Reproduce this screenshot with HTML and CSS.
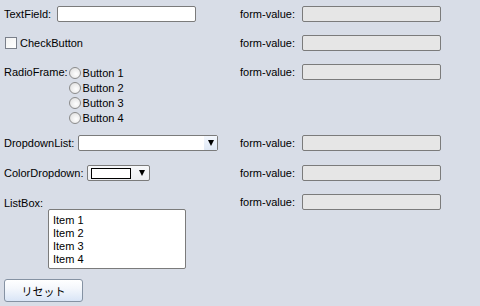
FILE: index.html
```html
<!DOCTYPE html>
<html lang="ja">
<head>
<meta charset="utf-8">
<title>Form</title>
<link rel="stylesheet" href="styles.css">
</head>
<body>
<form class="form">
  <div class="row">
    <div class="left"><span class="lbl">TextField:</span><span class="textfield"></span></div>
    <div class="right"><span class="vlbl">form-value:</span><span class="value"></span></div>
  </div>
  <div class="row gap13">
    <div class="left"><span class="check"></span><span class="lbl">CheckButton</span></div>
    <div class="right"><span class="vlbl">form-value:</span><span class="value"></span></div>
  </div>
  <div class="row gap13 top">
    <div class="left top">
      <span class="lbl radiolbl">RadioFrame:</span>
      <div class="radios">
        <div class="radio-row"><span class="radio"></span><span>Button 1</span></div>
        <div class="radio-row"><span class="radio"></span><span>Button 2</span></div>
        <div class="radio-row"><span class="radio"></span><span>Button 3</span></div>
        <div class="radio-row"><span class="radio"></span><span>Button 4</span></div>
      </div>
    </div>
    <div class="right"><span class="vlbl">form-value:</span><span class="value"></span></div>
  </div>
  <div class="row gap10">
    <div class="left"><span class="lbl">DropdownList:</span><span class="dropdown"><span class="dd-btn"><span class="tri"></span></span></span></div>
    <div class="right"><span class="vlbl">form-value:</span><span class="value"></span></div>
  </div>
  <div class="row gap14">
    <div class="left"><span class="lbl">ColorDropdown:</span><span class="colordd"><span class="swatch"></span><span class="tri"></span></span></div>
    <div class="right"><span class="vlbl">form-value:</span><span class="value"></span></div>
  </div>
  <div class="row gap13 top">
    <div class="left"><span class="lbl listlbl">ListBox:</span></div>
    <div class="right"><span class="vlbl">form-value:</span><span class="value"></span></div>
  </div>
  <div class="listbox">
    <div>Item 1</div>
    <div>Item 2</div>
    <div>Item 3</div>
    <div>Item 4</div>
  </div>
  <button type="button" class="reset">リセット</button>
</form>
</body>
</html>
```
FILE: styles.css
```css
html, body {
  margin: 0;
  padding: 0;
  background: #d8dde7;
}
body {
  font-family: "Liberation Sans", Arial, sans-serif;
  font-size: 11px;
  color: #000;
  width: 480px;
  height: 306px;
  overflow: hidden;
}
.form {
  padding: 6px 0 0 4px;
  margin: 0;
}
.row {
  display: flex;
  align-items: center;
  height: 16px;
}
.row.top { align-items: flex-start; height: auto; }
.gap13 { margin-top: 13px; }
.gap10 { margin-top: 10px; }
.gap14 { margin-top: 14px; }
.left {
  width: 236px;
  display: flex;
  align-items: center;
  height: 16px;
}
.left.top { align-items: flex-start; height: auto; }
.right {
  display: flex;
  align-items: center;
  height: 16px;
}
.lbl { white-space: nowrap; margin-right: 4px; line-height: 16px; }
.vlbl { width: 62px; white-space: nowrap; line-height: 16px; }
.textfield {
  box-sizing: border-box;
  width: 139px;
  height: 16px;
  margin-left: 2px;
  background: #fff;
  border: 1px solid #7b7b7b;
  border-radius: 2px;
}
.value {
  box-sizing: border-box;
  width: 139px;
  height: 16px;
  background: #e6e6e6;
  border: 1px solid #7b7b7b;
  border-radius: 2px;
}
.check {
  box-sizing: border-box;
  width: 12px;
  height: 12px;
  margin: 0 3px 0 1px;
  background: linear-gradient(135deg, #f2f2f2, #fff);
  border: 1px solid #7a7f8a;
}
.radiolbl { margin-top: 1px; margin-right: 1px; line-height: 15px; }
.radios { margin-top: 1px; }
.radio-row {
  display: flex;
  align-items: center;
  height: 15px;
}
.radio {
  box-sizing: border-box;
  width: 12px;
  height: 12px;
  border-radius: 50%;
  border: 1px solid #8b8b8b;
  background: radial-gradient(circle at 60% 60%, #fff 0, #e9e9e9 60%, #d4d4d4 100%);
  margin-right: 2px;
}
.dropdown {
  box-sizing: border-box;
  width: 140px;
  height: 16px;
  background: #fff;
  border: 1px solid #7b7b7b;
  border-radius: 2px;
  display: flex;
  justify-content: flex-end;
}
.dd-btn {
  width: 13px;
  height: 14px;
  background: linear-gradient(#f3f7fd, #dfe8f5);
  display: flex;
  align-items: center;
  justify-content: center;
}
.tri {
  width: 0;
  height: 0;
  border-left: 3px solid transparent;
  border-right: 3px solid transparent;
  border-top: 6px solid #000;
}
.colordd {
  box-sizing: border-box;
  width: 63px;
  height: 16px;
  background: linear-gradient(#f7f8fa, #eceef2);
  border: 1px solid #7b7b7b;
  border-radius: 2px;
  display: flex;
  align-items: center;
  padding-left: 3px;
}
.colordd .tri { margin-left: 8px; margin-top: -1px; }
.swatch {
  box-sizing: border-box;
  width: 40px;
  height: 11px;
  background: #fff;
  border: 1px solid #000;
}
.listlbl { margin-top: 1px; }
.listbox {
  box-sizing: border-box;
  width: 138px;
  height: 60px;
  margin: -1px 0 0 44px;
  background: #fff;
  border: 1px solid #7b7b7b;
  border-radius: 2px;
  padding: 4px 0 0 4px;
  line-height: 13px;
}
.reset {
  display: block;
  box-sizing: border-box;
  margin-top: 10px;
  width: 79px;
  height: 23px;
  padding: 0;
  border: 1px solid #8592a3;
  border-radius: 3px;
  background: linear-gradient(#ffffff 0%, #f4f7fc 40%, #d9e5f6 100%);
  font-family: "Noto Sans CJK JP", sans-serif;
  font-size: 11px;
  color: #000;
}
```
